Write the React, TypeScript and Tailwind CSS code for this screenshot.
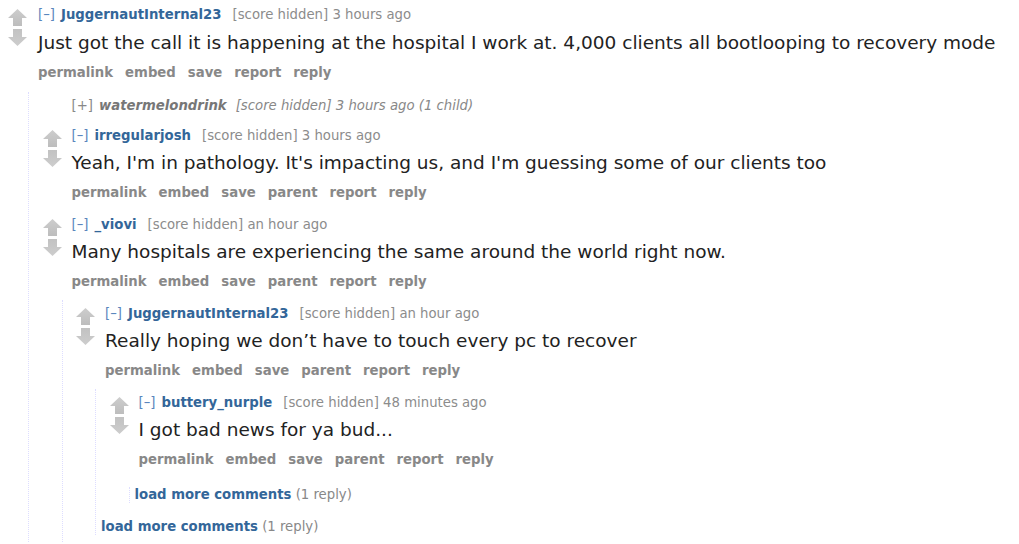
import React from 'react';

type Node =
  | {
      kind: 'comment';
      user: string;
      time: string;
      body?: string;
      buttons?: string[];
      collapsed?: boolean;
      note?: string;
      children?: Node[];
    }
  | { kind: 'more'; label: string };

const thread: Node = {
  kind: 'comment',
  user: 'JuggernautInternal23',
  time: '3 hours ago',
  body: 'Just got the call it is happening at the hospital I work at. 4,000 clients all bootlooping to recovery mode',
  buttons: ['permalink', 'embed', 'save', 'report', 'reply'],
  children: [
    { kind: 'comment', user: 'watermelondrink', time: '3 hours ago', collapsed: true, note: '(1 child)' },
    {
      kind: 'comment',
      user: 'irregularjosh',
      time: '3 hours ago',
      body: "Yeah, I'm in pathology. It's impacting us, and I'm guessing some of our clients too",
      buttons: ['permalink', 'embed', 'save', 'parent', 'report', 'reply'],
    },
    {
      kind: 'comment',
      user: '_viovi',
      time: 'an hour ago',
      body: 'Many hospitals are experiencing the same around the world right now.',
      buttons: ['permalink', 'embed', 'save', 'parent', 'report', 'reply'],
      children: [
        {
          kind: 'comment',
          user: 'JuggernautInternal23',
          time: 'an hour ago',
          body: 'Really hoping we don\u2019t have to touch every pc to recover',
          buttons: ['permalink', 'embed', 'save', 'parent', 'report', 'reply'],
          children: [
            {
              kind: 'comment',
              user: 'buttery_nurple',
              time: '48 minutes ago',
              body: 'I got bad news for ya bud...',
              buttons: ['permalink', 'embed', 'save', 'parent', 'report', 'reply'],
              children: [{ kind: 'more', label: '(1 reply)' }],
            },
            { kind: 'more', label: '(1 reply)' },
          ],
        },
      ],
    },
  ],
};

function Arrow({ down }: { down?: boolean }) {
  const id = down ? 'gdown' : 'gup';
  return (
    <svg width="19" height="17" viewBox="0 0 19 17" className={down ? 'mt-[3px] block' : 'block'}>
      <defs>
        <linearGradient id={id} x1="0" y1="0" x2="0" y2="1">
          <stop offset="0" stopColor={down ? '#c2c2c2' : '#cdcdcd'} />
          <stop offset="1" stopColor={down ? '#cdcdcd' : '#bdbdbd'} />
        </linearGradient>
      </defs>
      <path
        d={down ? 'M9.5 17 L19 8 L14 8 L14 0 L5 0 L5 8 L0 8 Z' : 'M9.5 0 L19 9 L14 9 L14 17 L5 17 L5 9 L0 9 Z'}
        fill={`url(#${id})`}
      />
    </svg>
  );
}

function More({ label }: { label: string }) {
  return (
    <div className="mt-[9px] mb-[7px] pl-[5px] text-[13.25px] leading-[16px]">
      <span className="font-bold text-[#336699]">load more comments</span>{' '}
      <span className="text-[#888]">{label}</span>
    </div>
  );
}

function Comment({ c, top }: { c: Extract<Node, { kind: 'comment' }>; top?: boolean }) {
  if (c.collapsed) {
    return (
      <div className="flex pl-[13.5px] gap-[10px] pt-[6px] pb-[8px]">
        <div className="w-[19px] shrink-0" />
        <div className="text-[13.25px] leading-[16px] text-[#888] whitespace-nowrap">
          <span className="text-[#888]">[+]</span>
          <span className="ml-[6px] font-bold italic text-[#777]">{c.user}</span>
          <span className="ml-[9px] italic">[score hidden] {c.time} {c.note}</span>
        </div>
      </div>
    );
  }
  return (
    <div className={top ? 'flex pl-[8px] gap-[11px]' : 'flex pl-[13.5px] gap-[10px]'}>
      <div className="flex flex-col pt-[8px] w-[19px] shrink-0">
        <Arrow />
        <Arrow down />
      </div>
      <div className="flex-1 min-w-0 pt-[6px]">
        <div className="text-[13.25px] leading-[16px] whitespace-nowrap">
          <span className="text-[#5a86bd]">[–]</span>
          <span className="ml-[6px] font-bold text-[#336699]">{c.user}</span>
          <span className="ml-[11px] text-[#8c8c8c]">[score hidden] {c.time}</span>
        </div>
        <p className={(top ? 'mt-[8px] ' : 'mt-[7px] ') + 'text-[18.5px] leading-[24px] text-[#222] whitespace-nowrap'}>
          {c.body}
        </p>
        <div className="mt-[10px] pb-[10px] flex gap-[12px] text-[13.25px] leading-[16px] font-bold text-[#888]">
          {c.buttons?.map((b) => (
            <span key={b}>{b}</span>
          ))}
        </div>
        {c.children && (
          <div className={(top ? 'mt-[1px] ' : '') + '-ml-[10px] border-l border-dotted border-[#ddddff]'}>
            {c.children.map((n, i) =>
              n.kind === 'more' ? <More key={i} label={n.label} /> : <Comment key={i} c={n} />
            )}
          </div>
        )}
      </div>
    </div>
  );
}

export default function App() {
  return (
    <div className="min-h-screen bg-white pt-[1px]" style={{ fontFamily: '"DejaVu Sans", Verdana, sans-serif' }}>
      {thread.kind === 'comment' && <Comment c={thread} top />}
    </div>
  );
}
